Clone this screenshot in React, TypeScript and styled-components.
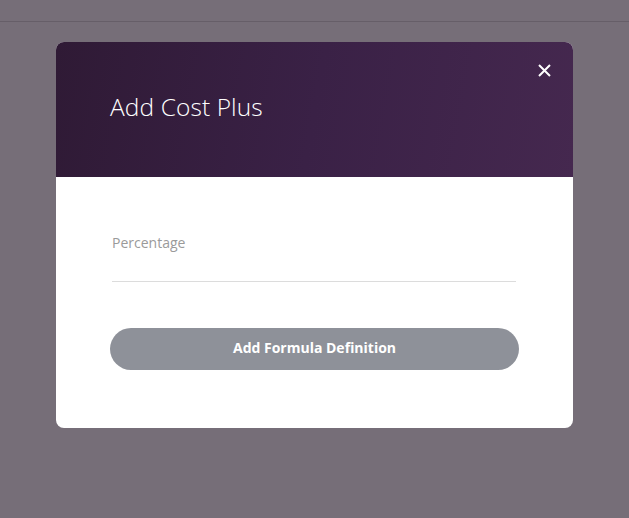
import styled, { createGlobalStyle } from 'styled-components';

const GlobalStyle = createGlobalStyle`
  html, body {
    margin: 0;
    padding: 0;
    height: 100%;
  }
  body {
    font-family: 'Open Sans', 'Noto Sans', sans-serif;
    background-color: #766e78;
  }
`;

const Page = styled.div`
  width: 629px;
  height: 518px;
  background-color: #766e78;
  overflow: hidden;
`;

const TopBar = styled.div`
  height: 21px;
  border-bottom: 1px solid #665e68;
`;

const Overlay = styled.div`
  display: flex;
  justify-content: center;
  padding-top: 20px;
`;

const Modal = styled.div`
  width: 517px;
  border-radius: 8px;
  overflow: hidden;
  background-color: #ffffff;
`;

const Header = styled.div`
  position: relative;
  height: 135px;
  padding: 0 54px;
  display: flex;
  align-items: center;
  background: linear-gradient(100deg, #2f1a35 0%, #3a2146 50%, #45284f 100%);
  box-sizing: border-box;
`;

const Title = styled.h2`
  margin: 0 0 6px;
  font-size: 24.5px;
  font-weight: 300;
  color: #ffffff;
  letter-spacing: 0.1px;
`;

const CloseButton = styled.button`
  position: absolute;
  top: 19px;
  right: 20px;
  width: 18px;
  height: 18px;
  padding: 0;
  border: none;
  background: none;
  cursor: pointer;
  display: flex;
  align-items: center;
  justify-content: center;
`;

const Body = styled.div`
  padding: 57px 54px 58px;
  display: flex;
  flex-direction: column;
`;

const Field = styled.label`
  display: flex;
  flex-direction: column;
  margin: 0 3px 0 2px;
  border-bottom: 1px solid #dcdcdc;
  padding-bottom: 29px;
`;

const FieldLabel = styled.span`
  font-size: 14px;
  color: #9a9a9a;
  line-height: 18px;
`;

const SubmitButton = styled.button`
  margin-top: 46px;
  height: 42px;
  width: 409px;
  padding: 0 0 3px;
  border: none;
  border-radius: 21px;
  background-color: #8e9199;
  color: #ffffff;
  font-family: 'Open Sans', 'Noto Sans', sans-serif;
  font-size: 14px;
  font-weight: 700;
`;

const App = () => {
  return (
    <Page>
      <GlobalStyle />
      <TopBar />
      <Overlay>
        <Modal>
          <Header>
            <Title>Add Cost Plus</Title>
            <CloseButton type="button" aria-label="Close">
              <svg width="13" height="13" viewBox="0 0 13 13">
                <path d="M1 1 L12 12 M12 1 L1 12" stroke="#ffffff" strokeWidth="2" />
              </svg>
            </CloseButton>
          </Header>
          <Body>
            <Field>
              <FieldLabel>Percentage</FieldLabel>
            </Field>
            <SubmitButton type="button">Add Formula Definition</SubmitButton>
          </Body>
        </Modal>
      </Overlay>
    </Page>
  );
};

export default App;
